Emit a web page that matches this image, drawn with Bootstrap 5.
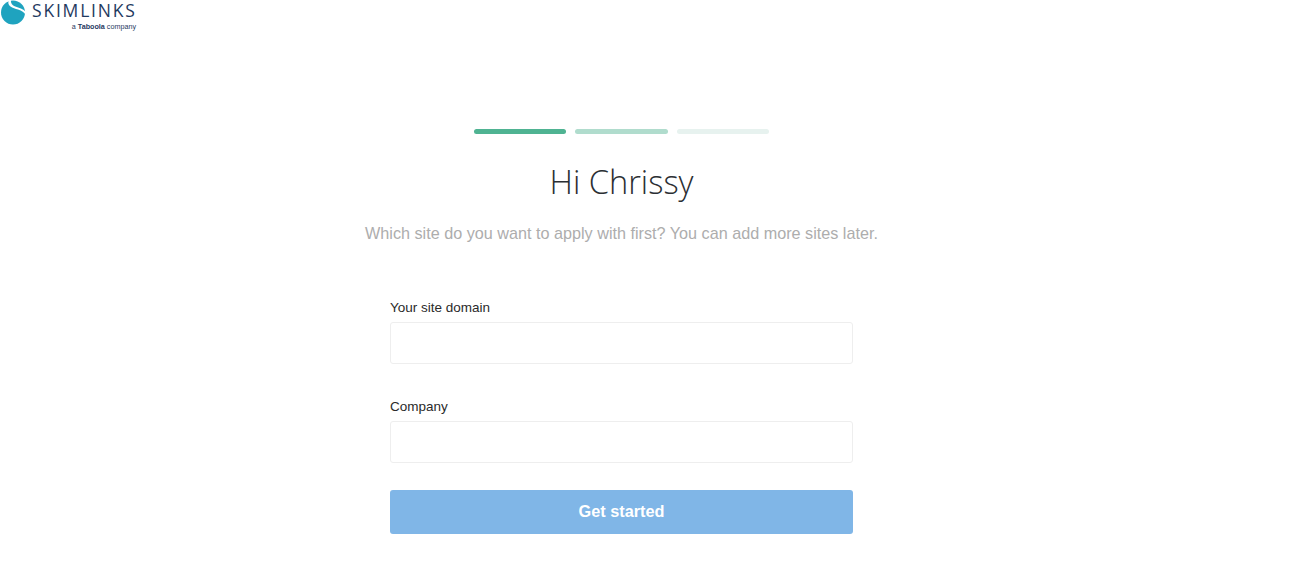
<!DOCTYPE html>
<html lang="en">
<head>
  <meta charset="UTF-8">
  <meta name="viewport" content="width=device-width, initial-scale=1.0">
  <title>Skimlinks - Get started</title>
  <link href="https://cdn.jsdelivr.net/npm/bootstrap@5.3.3/dist/css/bootstrap.min.css" rel="stylesheet">
  <style>
    body {
      background-color: #fff;
      font-family: "Liberation Sans", Arial, sans-serif;
    }
    .brand-wrap {
      height: 129px;
    }
    .brand-copy {
      width: 104px;
      margin-left: 6px;
      padding-top: 3px;
    }
    .brand-name {
      font-family: "Open Sans", sans-serif;
      font-size: 17.5px;
      line-height: 15px;
      letter-spacing: 1.8px;
      white-space: nowrap;
      color: #1f3a5f;
    }
    .brand-sub {
      font-size: 7.2px;
      line-height: 8px;
      color: #1f3a5f;
      margin-top: 5px;
      white-space: nowrap;
    }
    .brand-sub b {
      font-weight: 700;
    }
    .onboard {
      width: 1243px;
    }
    .steps {
      width: 296px;
      gap: 9.5px;
    }
    .step-bar {
      height: 5px;
      flex: 1;
      border-radius: 3px;
    }
    .step-one { background-color: #4fb392; }
    .step-two { background-color: #b0dccd; }
    .step-three { background-color: #e7f2ef; }
    .hello {
      font-family: "Open Sans", sans-serif;
      font-weight: 300;
      font-size: 32.6px;
      line-height: 48px;
      color: #2b2f33;
      margin: 24px 0 0;
    }
    .intro {
      font-size: 16.2px;
      font-weight: 400;
      line-height: 24px;
      color: #adadad;
      margin: 15px 0 0;
    }
    .site-form {
      width: 463px;
      margin-top: 55px;
    }
    .site-form label {
      font-size: 13.5px;
      line-height: 16px;
      color: #2a2a2a;
      margin-bottom: 6px;
      display: block;
    }
    .site-form .form-control {
      height: 41.5px;
      border: 1px solid #eeeeee;
      border-radius: 3px;
      margin-bottom: 35.5px;
    }
    .go-btn {
      height: 44px;
      padding: 4px 12px 6px;
      background-color: #80b6e7;
      border: 0;
      border-radius: 3px;
      color: #fff;
      font-size: 16.3px;
      font-weight: 700;
      margin-top: -8px;
    }
    .go-btn:disabled {
      background-color: #80b6e7;
      color: #fff;
      opacity: 1;
    }
  </style>
</head>
<body>
  <div class="brand-wrap d-flex align-items-start">
    <svg width="26" height="26" viewBox="0 0 26 26" class="flex-shrink-0">
      <circle cx="13" cy="12.5" r="12" fill="#1fa3bf"/>
      <path d="M9 0C6 6 13 8 18 9.5C22 10.8 24 12.5 26 15L26 12C23 9 20 8 16 6.8C12.5 5.5 10.5 3.5 11 0Z" fill="#fff"/>
    </svg>
    <div class="brand-copy">
      <div class="brand-name">SKIMLINKS</div>
      <div class="brand-sub text-end">a <b>Taboola</b> company</div>
    </div>
  </div>
  <div class="onboard d-flex flex-column align-items-center">
    <div class="steps d-flex">
      <div class="step-bar step-one"></div>
      <div class="step-bar step-two"></div>
      <div class="step-bar step-three"></div>
    </div>
    <h1 class="hello">Hi Chrissy</h1>
    <p class="intro">Which site do you want to apply with first? You can add more sites later.</p>
    <form class="site-form">
      <label for="siteDomain">Your site domain</label>
      <input id="siteDomain" type="text" class="form-control">
      <label for="company">Company</label>
      <input id="company" type="text" class="form-control">
      <button type="button" class="btn go-btn w-100" disabled>Get started</button>
    </form>
  </div>
  <script src="https://cdn.jsdelivr.net/npm/bootstrap@5.3.3/dist/js/bootstrap.bundle.min.js"></script>
</body>
</html>
